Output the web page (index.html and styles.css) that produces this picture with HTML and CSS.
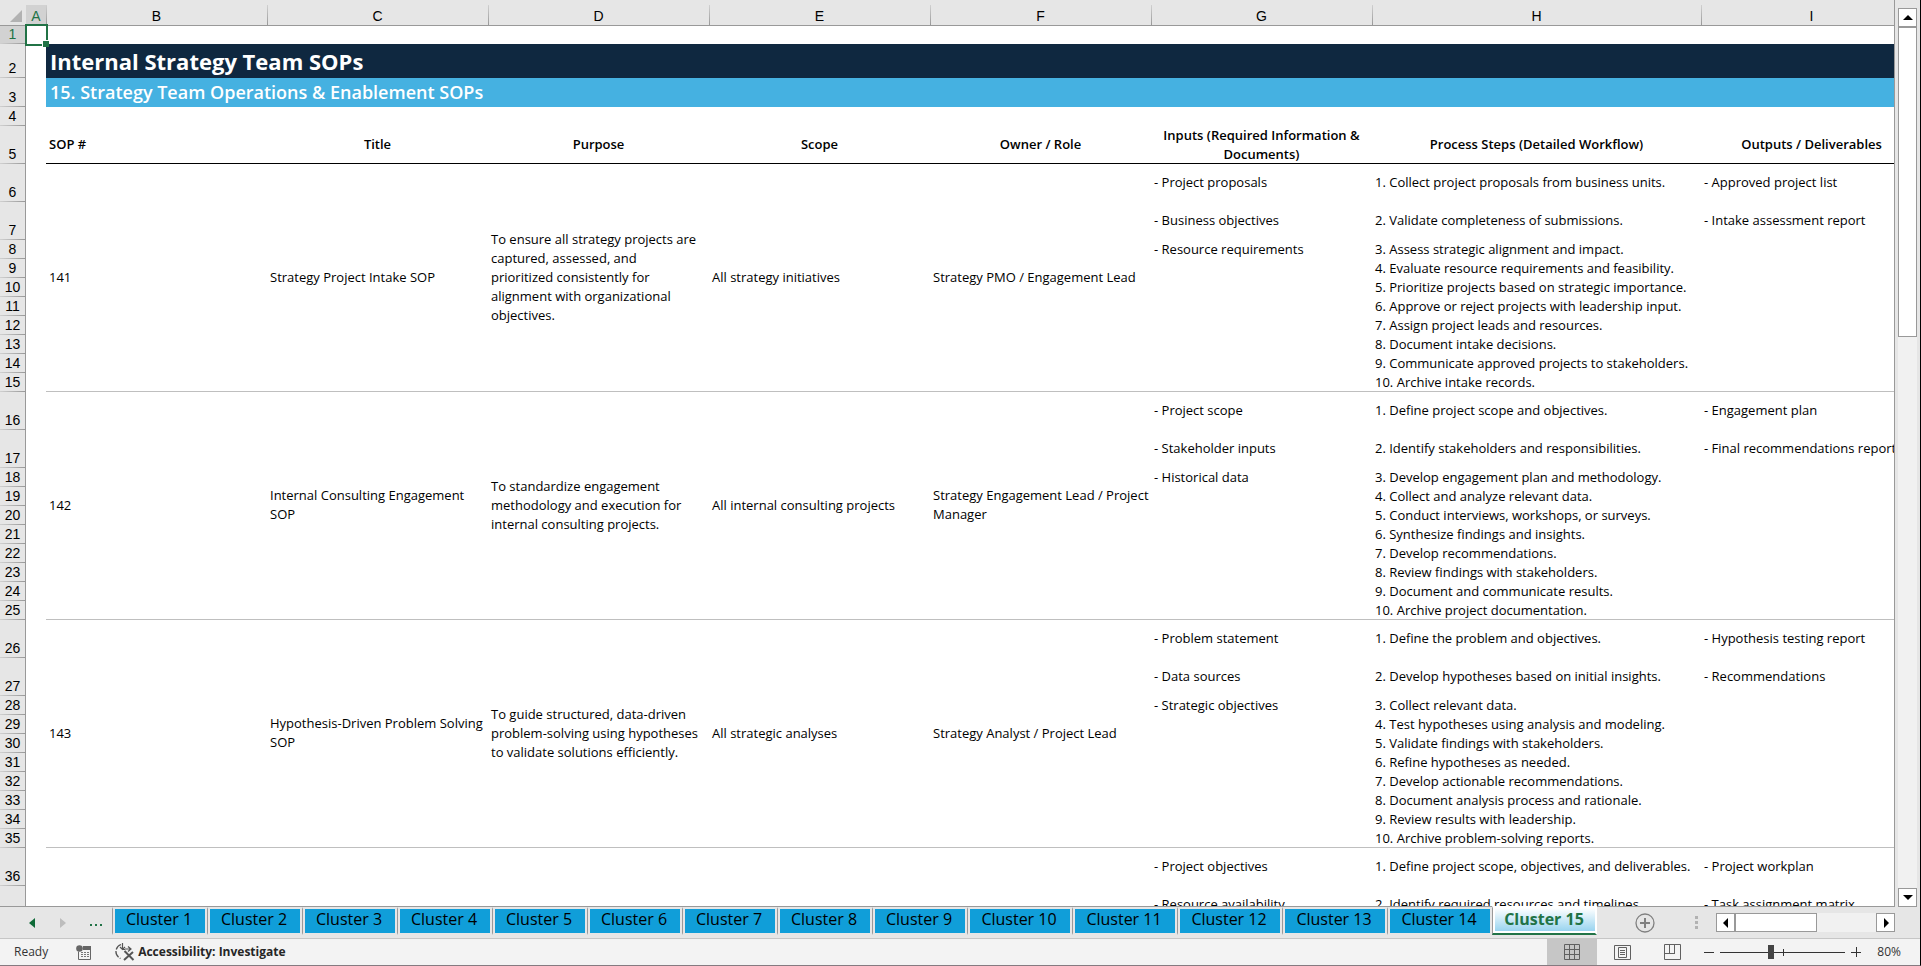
FILE: index.html
```
<!DOCTYPE html>
<html lang="en">
<head>
    <meta charset="UTF-8">
    <meta name="viewport" content="width=device-width, initial-scale=1.0">
    <title>Internal Strategy Team SOPs</title>
    <link rel="stylesheet" href="styles.css">
</head>
<body>

    <main class="workspace">
        <div class="sheet">
            <table class="grid">
                <colgroup>
                    <col class="col-num">
                    <col class="col-a">
                    <col class="col-std">
                    <col class="col-std">
                    <col class="col-std">
                    <col class="col-std">
                    <col class="col-std">
                    <col class="col-std">
                    <col class="col-steps">
                    <col class="col-std">
                </colgroup>
                <thead>
                    <tr>
                        <th class="corner"><svg width="12" height="12" viewBox="0 0 12 12"><path d="M12 0V12H0Z" fill="#b2b2b2"/></svg></th>
                        <th class="selected">A</th>
                        <th>B</th>
                        <th>C</th>
                        <th>D</th>
                        <th>E</th>
                        <th>F</th>
                        <th>G</th>
                        <th>H</th>
                        <th>I</th>
                    </tr>
                </thead>
                <tbody>
                    <tr class="short">
                        <th class="selected">1</th>
                        <td class="active-cell"><span class="cursor"></span></td>
                        <td colspan="8"></td>
                    </tr>
                    <tr class="title-row">
                        <th>2</th>
                        <td></td>
                        <td class="title" colspan="8">Internal Strategy Team SOPs</td>
                    </tr>
                    <tr class="subtitle-row">
                        <th>3</th>
                        <td></td>
                        <td class="subtitle" colspan="8">15. Strategy Team Operations &amp; Enablement SOPs</td>
                    </tr>
                    <tr>
                        <th>4</th>
                        <td></td>
                        <td colspan="8"></td>
                    </tr>
                    <tr class="tall heads">
                        <th>5</th>
                        <td></td>
                        <td class="left">SOP #</td>
                        <td>Title</td>
                        <td>Purpose</td>
                        <td>Scope</td>
                        <td>Owner / Role</td>
                        <td class="two-line">Inputs (Required Information &amp;<br>Documents)</td>
                        <td>Process Steps (Detailed Workflow)</td>
                        <td>Outputs / Deliverables</td>
                    </tr>

                    <!-- SOP 141 -->
                    <tr class="tall">
                        <th>6</th>
                        <td></td>
                        <td class="merged" rowspan="10">141</td>
                        <td class="merged" rowspan="10">Strategy Project Intake SOP</td>
                        <td class="merged" rowspan="10">To ensure all strategy projects are<br>captured, assessed, and<br>prioritized consistently for<br>alignment with organizational<br>objectives.</td>
                        <td class="merged" rowspan="10">All strategy initiatives</td>
                        <td class="merged" rowspan="10">Strategy PMO / Engagement Lead</td>
                        <td>- Project proposals</td>
                        <td>1. Collect project proposals from business units.</td>
                        <td>- Approved project list</td>
                    </tr>
                    <tr class="tall"><th>7</th><td></td><td>- Business objectives</td><td>2. Validate completeness of submissions.</td><td>- Intake assessment report</td></tr>
                    <tr><th>8</th><td></td><td>- Resource requirements</td><td>3. Assess strategic alignment and impact.</td><td></td></tr>
                    <tr><th>9</th><td></td><td></td><td>4. Evaluate resource requirements and feasibility.</td><td></td></tr>
                    <tr><th>10</th><td></td><td></td><td>5. Prioritize projects based on strategic importance.</td><td></td></tr>
                    <tr><th>11</th><td></td><td></td><td>6. Approve or reject projects with leadership input.</td><td></td></tr>
                    <tr><th>12</th><td></td><td></td><td>7. Assign project leads and resources.</td><td></td></tr>
                    <tr><th>13</th><td></td><td></td><td>8. Document intake decisions.</td><td></td></tr>
                    <tr><th>14</th><td></td><td></td><td>9. Communicate approved projects to stakeholders.</td><td></td></tr>
                    <tr class="last"><th>15</th><td></td><td></td><td>10. Archive intake records.</td><td></td></tr>

                    <!-- SOP 142 -->
                    <tr class="tall">
                        <th>16</th>
                        <td></td>
                        <td class="merged" rowspan="10">142</td>
                        <td class="merged" rowspan="10">Internal Consulting Engagement<br>SOP</td>
                        <td class="merged" rowspan="10">To standardize engagement<br>methodology and execution for<br>internal consulting projects.</td>
                        <td class="merged" rowspan="10">All internal consulting projects</td>
                        <td class="merged" rowspan="10">Strategy Engagement Lead / Project<br>Manager</td>
                        <td>- Project scope</td>
                        <td>1. Define project scope and objectives.</td>
                        <td>- Engagement plan</td>
                    </tr>
                    <tr class="tall"><th>17</th><td></td><td>- Stakeholder inputs</td><td>2. Identify stakeholders and responsibilities.</td><td>- Final recommendations report</td></tr>
                    <tr><th>18</th><td></td><td>- Historical data</td><td>3. Develop engagement plan and methodology.</td><td></td></tr>
                    <tr><th>19</th><td></td><td></td><td>4. Collect and analyze relevant data.</td><td></td></tr>
                    <tr><th>20</th><td></td><td></td><td>5. Conduct interviews, workshops, or surveys.</td><td></td></tr>
                    <tr><th>21</th><td></td><td></td><td>6. Synthesize findings and insights.</td><td></td></tr>
                    <tr><th>22</th><td></td><td></td><td>7. Develop recommendations.</td><td></td></tr>
                    <tr><th>23</th><td></td><td></td><td>8. Review findings with stakeholders.</td><td></td></tr>
                    <tr><th>24</th><td></td><td></td><td>9. Document and communicate results.</td><td></td></tr>
                    <tr class="last"><th>25</th><td></td><td></td><td>10. Archive project documentation.</td><td></td></tr>

                    <!-- SOP 143 -->
                    <tr class="tall">
                        <th>26</th>
                        <td></td>
                        <td class="merged" rowspan="10">143</td>
                        <td class="merged" rowspan="10">Hypothesis-Driven Problem Solving<br>SOP</td>
                        <td class="merged" rowspan="10">To guide structured, data-driven<br>problem-solving using hypotheses<br>to validate solutions efficiently.</td>
                        <td class="merged" rowspan="10">All strategic analyses</td>
                        <td class="merged" rowspan="10">Strategy Analyst / Project Lead</td>
                        <td>- Problem statement</td>
                        <td>1. Define the problem and objectives.</td>
                        <td>- Hypothesis testing report</td>
                    </tr>
                    <tr class="tall"><th>27</th><td></td><td>- Data sources</td><td>2. Develop hypotheses based on initial insights.</td><td>- Recommendations</td></tr>
                    <tr><th>28</th><td></td><td>- Strategic objectives</td><td>3. Collect relevant data.</td><td></td></tr>
                    <tr><th>29</th><td></td><td></td><td>4. Test hypotheses using analysis and modeling.</td><td></td></tr>
                    <tr><th>30</th><td></td><td></td><td>5. Validate findings with stakeholders.</td><td></td></tr>
                    <tr><th>31</th><td></td><td></td><td>6. Refine hypotheses as needed.</td><td></td></tr>
                    <tr><th>32</th><td></td><td></td><td>7. Develop actionable recommendations.</td><td></td></tr>
                    <tr><th>33</th><td></td><td></td><td>8. Document analysis process and rationale.</td><td></td></tr>
                    <tr><th>34</th><td></td><td></td><td>9. Review results with leadership.</td><td></td></tr>
                    <tr class="last"><th>35</th><td></td><td></td><td>10. Archive problem-solving reports.</td><td></td></tr>

                    <!-- next SOP, cut off by the window -->
                    <tr class="tall">
                        <th>36</th>
                        <td></td>
                        <td colspan="5"></td>
                        <td>- Project objectives</td>
                        <td>1. Define project scope, objectives, and deliverables.</td>
                        <td>- Project workplan</td>
                    </tr>
                    <tr class="tall">
                        <th></th>
                        <td></td>
                        <td colspan="5"></td>
                        <td>- Resource availability</td>
                        <td>2. Identify required resources and timelines.</td>
                        <td>- Task assignment matrix</td>
                    </tr>
                </tbody>
            </table>
        </div>

        <div class="vscroll">
            <button class="scroll-btn" aria-label="Scroll up"><svg width="10" height="6" viewBox="0 0 10 6"><path d="M5 0L10 5H0Z"/></svg></button>
            <div class="vtrack"><div class="vthumb"></div></div>
            <button class="scroll-btn" aria-label="Scroll down"><svg width="10" height="6" viewBox="0 0 10 6"><path d="M0 0H10L5 5Z"/></svg></button>
        </div>
    </main>

    <nav class="tabbar">
        <div class="tab-nav">
            <button aria-label="Previous sheet"><svg width="6" height="10" viewBox="0 0 6 10"><path d="M6 0V10L0 5Z" fill="#0f6b38"/></svg></button>
            <button aria-label="Next sheet"><svg width="6" height="10" viewBox="0 0 6 10"><path d="M0 0V10L6 5Z" fill="#bdbdbd"/></svg></button>
            <button class="more" aria-label="More sheets"><svg width="13" height="2" viewBox="0 0 13 2"><path d="M0 0H2V2H0ZM5 0H7V2H5ZM10 0H12V2H10Z" fill="#217346"/></svg></button>
        </div>
        <div class="tabs">
            <button class="tab">Cluster 1</button>
            <button class="tab">Cluster 2</button>
            <button class="tab">Cluster 3</button>
            <button class="tab">Cluster 4</button>
            <button class="tab">Cluster 5</button>
            <button class="tab">Cluster 6</button>
            <button class="tab">Cluster 7</button>
            <button class="tab">Cluster 8</button>
            <button class="tab">Cluster 9</button>
            <button class="tab wide">Cluster 10</button>
            <button class="tab wide">Cluster 11</button>
            <button class="tab wide">Cluster 12</button>
            <button class="tab wide">Cluster 13</button>
            <button class="tab wide">Cluster 14</button>
            <button class="tab current">Cluster 15</button>
        </div>
        <button class="add-sheet" aria-label="New sheet">
            <svg width="20" height="20" viewBox="0 0 20 20" fill="none" stroke="#808080"><circle cx="10" cy="10" r="9" stroke-width="1.3"/><path d="M10 5V15M5 10H15" stroke-width="2"/></svg>
        </button>
        <div class="hscroll">
            <svg class="grip" width="3" height="13" viewBox="0 0 3 13"><path d="M0 0H3V3H0ZM0 5H3V8H0ZM0 10H3V13H0Z" fill="#b2b2b2"/></svg>
            <button class="scroll-btn" aria-label="Scroll left"><svg width="6" height="10" viewBox="0 0 6 10"><path d="M5 0V10L0 5Z"/></svg></button>
            <div class="htrack"><div class="hthumb"></div></div>
            <button class="scroll-btn" aria-label="Scroll right"><svg width="6" height="10" viewBox="0 0 6 10"><path d="M1 0V10L6 5Z"/></svg></button>
        </div>
    </nav>

    <footer class="status">
        <span class="ready">Ready</span>
        <button class="macro" aria-label="Record macro">
            <svg width="16" height="15" viewBox="0 0 16 15"><path d="M2.500 6.500V14.500H14.500V3" fill="none" stroke="#666"/><path d="M7 1H15V5H7Z" fill="#666"/><circle cx="3.500" cy="3.500" r="3.300" fill="#666"/><path d="M5 7.500H7M8 7.500H10M11 7.500H13M5 9.500H7M8 9.500H10M11 9.500H13M5 11.500H7M8 11.500H10M11 11.500H13" stroke="#777"/></svg>
        </button>
        <button class="access">
            <svg width="20" height="18" viewBox="0 0 20 18" fill="none" stroke="#555"><path d="M6 1.500A7.500 7.500 0 0 0 5.500 15.500" stroke-width="1.300" stroke-dasharray="7 1.500"/><path d="M7.500 0V6M5 4L7.500 6.500L10 4M7 6.500H10M13 3.500L16 6L13 8.500M10 6H16" stroke-width="1.200"/><path d="M9.500 8L18.500 17M18 9L9 17" stroke-width="2"/></svg>
            Accessibility: Investigate
        </button>
        <div class="views">
            <button class="view on" aria-label="Normal view"><svg width="16" height="16" viewBox="0 0 16 16" fill="none" stroke="#606060"><path d="M.5 .5H15.500V15.500H.5ZM5.500 0V16M10.500 0V16M0 5.500H16M0 10.500H16"/></svg></button>
            <button class="view" aria-label="Page layout"><svg width="17" height="15" viewBox="0 0 17 15" fill="none" stroke="#606060"><path d="M.5 .5H16.500V14.500H.5ZM4.500 2.500H12.500V12.500H4.500ZM6 5.500H11M6 7.500H11M6 9.500H11"/></svg></button>
            <button class="view" aria-label="Page break preview"><svg width="17" height="16" viewBox="0 0 17 16" fill="none" stroke="#606060"><path d="M.5 .5H16.500V15.500H.5ZM5.500 0V9.500M10.500 0V9.500M0 9.500H11"/></svg></button>
        </div>
        <div class="zoom">
            <button aria-label="Zoom out"><svg width="10" height="10" viewBox="0 0 10 10"><path d="M0 5.500H10" stroke="#333"/></svg></button>
            <div class="slider"><input type="range" min="0" max="200" value="80" aria-label="Zoom"><span class="tick"></span></div>
            <button aria-label="Zoom in"><svg width="10" height="10" viewBox="0 0 10 10"><path d="M0 5.500H10M5.500 0V10" stroke="#333"/></svg></button>
            <span class="percent">80%</span>
        </div>
    </footer>

</body>
</html>
```
FILE: styles.css
```
* {
    box-sizing: border-box;
}

body {
    margin: 0;
    height: 100vh;
    display: flex;
    flex-direction: column;
    overflow: hidden;
    background: #e6e6e6;
    border-right: 1px solid #000;
    border-bottom: 1px solid #857a80;
    font-family: "Open Sans", "Liberation Sans", sans-serif;
    font-size: 13px;
    color: #000;
}

button {
    display: flex;
    align-items: center;
    justify-content: center;
    padding: 0;
    border: none;
    background: none;
    color: inherit;
    font: inherit;
}

/* Sheet */
.workspace {
    flex: 1;
    min-height: 0;
    display: flex;
}

.sheet {
    flex: 1;
    min-width: 0;
    overflow: hidden;
    background: #fff;
    border-right: 1px solid #999;
    border-bottom: 1px solid #999;
}

.grid {
    width: 100%;
    table-layout: fixed;
    border-collapse: separate;
    border-spacing: 0;
}

.col-num { width: 26px; }
.col-a { width: 20px; }
.col-std { width: 221px; }
.col-steps { width: 329px; }

.grid th {
    padding: 0 0 1px;
    background: linear-gradient(to right, #d0d0d0, #999) bottom / 100% 1px no-repeat #e6e6e6;
    border-right: 1px solid #999;
    font: 14px/17px "Liberation Sans Narrow", "Liberation Sans", sans-serif;
    text-align: center;
    vertical-align: bottom;
}

.grid thead th {
    height: 26px;
    padding: 0;
    border-right: none;
    border-bottom: 1px solid #999;
    background: linear-gradient(#d0d0d0, #999) left bottom / 1px 20px no-repeat #e6e6e6;
}

.grid thead .corner {
    padding: 0 4px 3px 0;
    background: #e6e6e6;
    line-height: 12px;
}

.corner svg {
    display: block;
    margin-left: auto;
}

.grid .selected {
    color: #217346;
    background-color: #d2d2d2;
}

.grid thead .selected {
    background: linear-gradient(#d2d2d2, #d2d2d2) bottom / 100% 20px no-repeat #e6e6e6;
}

.grid td {
    height: 19px;
    padding: 0 3px;
    line-height: 19px;
    white-space: nowrap;
    vertical-align: middle;
}

.grid .short td {
    height: 18px;
    line-height: 18px;
}

.grid .tall td {
    height: 38px;
    padding-bottom: 2px;
}

.grid .tall .two-line {
    padding-bottom: 0;
}

.grid .title-row td {
    height: 34px;
}

.grid .subtitle-row td {
    height: 29px;
}

.grid .title,
.grid .subtitle {
    padding: 0 4px;
    color: #fff;
    font-weight: 700;
}

.grid .title {
    background: #0f2840;
    font-size: 22px;
}

.grid .subtitle {
    background: #45b1e1;
    font-size: 18px;
    font-weight: 600;
}

.grid .heads td {
    font-weight: 600;
    text-align: center;
}

.grid .heads td.left {
    text-align: left;
}

.heads td:nth-child(n+3) {
    box-shadow: inset 0 -1px #000;
}

.merged,
.last td:nth-child(n+3) {
    box-shadow: inset 0 -1px #bfbfbf;
}

/* Cell cursor */
.active-cell {
    position: relative;
}

.cursor {
    position: absolute;
    inset: -2px -2px -2px -1px;
    border: 2px solid #217346;
}

.cursor::after {
    content: "";
    position: absolute;
    right: -3px;
    bottom: -3px;
    width: 6px;
    height: 6px;
    background: #217346;
    border: 1px solid #fff;
    border-width: 1px 0 0 1px;
}

/* Scroll bars */
.vscroll {
    width: 25px;
    padding: 8px 3px 0;
    display: flex;
    flex-direction: column;
}

.scroll-btn {
    width: 19px;
    height: 19px;
    flex: none;
    background: #fff;
    border: 1px solid #999;
}

.vtrack {
    flex: 1;
    background: #f1f1f1;
}

.vthumb {
    height: 36%;
    background: #fff;
    border: 1px solid #999;
}

/* Sheet tabs */
.tabbar {
    height: 32px;
    display: flex;
    border-bottom: 1px solid #c6c6c6;
}

.tab-nav {
    width: 112px;
    padding: 0 9px 0 29px;
    display: flex;
    align-items: center;
    justify-content: space-between;
}

.more {
    padding-top: 4px;
}

.tabs {
    display: flex;
    align-items: flex-start;
}

.tab {
    width: 95px;
    height: 28px;
    padding-bottom: 4px;
    border: 2px solid #e6e6e6;
    border-left: 1px solid #999;
    background: #109ed9;
    box-shadow: inset 2px 0 #e6e6e6;
    font: 16px/20px "Open Sans", sans-serif;
}

.tab.wide {
    width: 105px;
}

.tab.current {
    position: relative;
    width: 105px;
    height: 29px;
    margin-top: -1px;
    border: 2px solid #fff;
    border-left: 1px solid #999;
    border-bottom: 2px solid #217346;
    background: linear-gradient(#fff, #90d0ee);
    box-shadow: inset 2px 0 #fff, inset 0 -2px #fff;
    color: #217346;
    font-weight: 700;
}

.add-sheet {
    margin-left: 38px;
}

.hscroll {
    margin-left: auto;
    padding-right: 25px;
    display: flex;
    align-items: center;
}

.grip {
    margin-right: 18px;
}

.htrack {
    width: 141px;
    height: 19px;
    background: #f1f1f1;
}

.hthumb {
    width: 82px;
    height: 19px;
    background: #fff;
    border: 1px solid #999;
}

/* Status bar */
.status {
    height: 26px;
    padding-left: 14px;
    display: flex;
    align-items: center;
    background: #f3f3f3;
    color: #333;
    font: 12px/16px "Open Sans", sans-serif;
}

.macro {
    margin-left: 28px;
}

.access {
    margin-left: 23px;
    gap: 3px;
    color: #262626;
    font-weight: 700;
}

.views {
    margin-left: auto;
    display: flex;
    align-self: stretch;
}

.view {
    width: 50px;
}

.view.on {
    background: #c6c6c6;
}

.zoom {
    width: 223px;
    padding: 0 19px 0 7px;
    display: flex;
    align-items: center;
}

.slider {
    position: relative;
    width: 125px;
    margin: 0 6px;
    display: flex;
}

.slider input {
    appearance: none;
    width: 100%;
    height: 15px;
    margin: 0;
    background: linear-gradient(#333, #333) center / 100% 1px no-repeat;
}

.slider input::-webkit-slider-thumb {
    appearance: none;
    width: 6px;
    height: 14px;
    background: #444;
}

.tick {
    position: absolute;
    left: 50%;
    top: 4px;
    width: 1px;
    height: 7px;
    background: #333;
}

.percent {
    margin-left: auto;
}
```
